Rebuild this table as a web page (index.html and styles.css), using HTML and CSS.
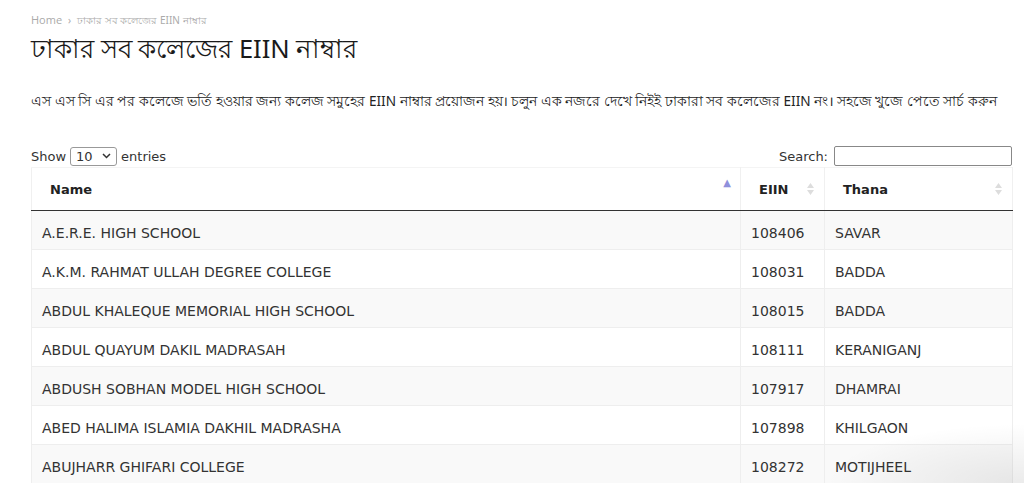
FILE: index.html
```html
<!DOCTYPE html>
<html lang="bn">
<head>
<meta charset="utf-8">
<title>ঢাকার সব কলেজের EIIN নাম্বার</title>
<link rel="stylesheet" href="styles.css">
</head>
<body>
<div class="page">
  <nav class="crumbs"><span class="home">Home</span><span class="sep">›</span><span>ঢাকার সব কলেজের EIIN নাম্বার</span></nav>
  <h1 class="title">ঢাকার সব কলেজের EIIN নাম্বার</h1>
  <p class="intro">এস এস সি এর পর কলেজে ভর্তি হওয়ার জন্য কলেজ সমুহের EIIN নাম্বার প্রয়োজন হয়। চলুন এক নজরে দেখে নিইই ঢাকারা সব কলেজের EIIN নং। সহজে খুজে পেতে সার্চ করুন</p>
  <div class="controls">
    <label class="length">Show <span class="select">10 <svg width="9" height="6" viewBox="0 0 9 6"><path d="M1 1l3.5 3.5L8 1" fill="none" stroke="#333" stroke-width="1.5"/></svg></span> entries</label>
    <label class="search">Search: <span class="input"></span></label>
  </div>
  <table class="dt">
    <colgroup><col class="c-name"><col class="c-eiin"><col class="c-thana"></colgroup>
    <thead>
      <tr>
        <th><span class="hd">Name</span><span class="sort asc">▲</span></th>
        <th><span class="hd">EIIN</span><span class="sort both"><svg width="7" height="12" viewBox="0 0 7 12"><path d="M3.5 0L7 5H0z M3.5 12L0 7h7z" fill="#ddd"/></svg></span></th>
        <th><span class="hd">Thana</span><span class="sort both"><svg width="7" height="12" viewBox="0 0 7 12"><path d="M3.5 0L7 5H0z M3.5 12L0 7h7z" fill="#ddd"/></svg></span></th>
      </tr>
    </thead>
    <tbody>
      <tr><td>A.E.R.E. HIGH SCHOOL</td><td>108406</td><td>SAVAR</td></tr>
      <tr><td>A.K.M. RAHMAT ULLAH DEGREE COLLEGE</td><td>108031</td><td>BADDA</td></tr>
      <tr><td>ABDUL KHALEQUE MEMORIAL HIGH SCHOOL</td><td>108015</td><td>BADDA</td></tr>
      <tr><td>ABDUL QUAYUM DAKIL MADRASAH</td><td>108111</td><td>KERANIGANJ</td></tr>
      <tr><td>ABDUSH SOBHAN MODEL HIGH SCHOOL</td><td>107917</td><td>DHAMRAI</td></tr>
      <tr><td>ABED HALIMA ISLAMIA DAKHIL MADRASHA</td><td>107898</td><td>KHILGAON</td></tr>
      <tr><td>ABUJHARR GHIFARI COLLEGE</td><td>108272</td><td>MOTIJHEEL</td></tr>
    </tbody>
  </table>
</div>
<div class="shade"></div>
</body>
</html>
```
FILE: styles.css
```css
html, body {
  margin: 0;
  padding: 0;
  background: #fff;
  overflow: hidden;
  height: 483px;
}
body {
  font-family: "Noto Sans", "Open Sans", sans-serif;
  color: #222;
  position: relative;
}
.page {
  padding: 13px 12px 0 31px;
  height: 470px;
  overflow: hidden;
}
.crumbs {
  font-size: 10px;
  color: #aaa;
  line-height: 14px;
  display: flex;
  gap: 6px;
  align-items: center;
}
.crumbs .home {
  font-family: "Open Sans", sans-serif;
  font-size: 11px;
}
.title {
  margin: 5px 0 0;
  font-size: 25.5px;
  font-weight: 400;
  line-height: 32px;
  color: #1a1a1a;
}
.intro {
  margin: 27px 0 0;
  font-size: 13.6px;
  line-height: 20px;
  color: #222;
  white-space: nowrap;
}
.controls {
  margin-top: 34px;
  display: flex;
  justify-content: space-between;
  align-items: center;
  font-family: "DejaVu Sans", Verdana, sans-serif;
  font-size: 13px;
  color: #333;
  height: 22px;
}
.length, .search {
  display: flex;
  align-items: center;
  gap: 4px;
}
.select {
  display: inline-flex;
  align-items: center;
  gap: 9px;
  height: 19px;
  padding: 0 5px;
  border: 1px solid #999;
  border-radius: 3px;
  font-size: 13px;
  box-sizing: border-box;
  width: 47px;
}
.input {
  display: inline-block;
  width: 178px;
  height: 20px;
  border: 1px solid #888;
  border-radius: 2px;
  box-sizing: border-box;
  margin-left: 2px;
}
.dt {
  width: 981px;
  border-collapse: collapse;
  table-layout: fixed;
  font-family: "DejaVu Sans", Verdana, sans-serif;
  font-size: 14px;
  color: #333;
}
.c-name { width: 709px; }
.c-eiin { width: 84px; }
.c-thana { width: 188px; }
.dt th {
  text-align: left;
  font-size: 13px;
  font-weight: 700;
  color: #222;
  padding: 0 18px;
  height: 42px;
  position: relative;
  border: 1px solid #f0f0f0;
  border-bottom: 1px solid #333;
  border-top-color: #f4f4f4;
}
.dt th .sort {
  position: absolute;
  right: 10px;
  line-height: 0;
}
.dt th .sort.asc {
  color: #8f90dc;
  font-size: 10px;
  line-height: 10px;
  top: 10px;
  right: 9px;
}
.dt th .sort.both {
  top: 15px;
}
.dt td {
  padding: 6px 10px 0;
  height: 32px;
  border: 1px solid #eee;
  border-top: none;
  white-space: nowrap;
  overflow: hidden;
}
.dt tbody tr:nth-child(odd) {
  background: #f9f9f9;
}
.dt tbody tr:nth-child(even) {
  background: #fff;
}
.shade {
  position: absolute;
  right: 0;
  bottom: 0;
  width: 200px;
  height: 60px;
  background: radial-gradient(ellipse at 100% 100%, rgba(0,0,0,0.08), rgba(0,0,0,0) 70%);
  pointer-events: none;
}
```
